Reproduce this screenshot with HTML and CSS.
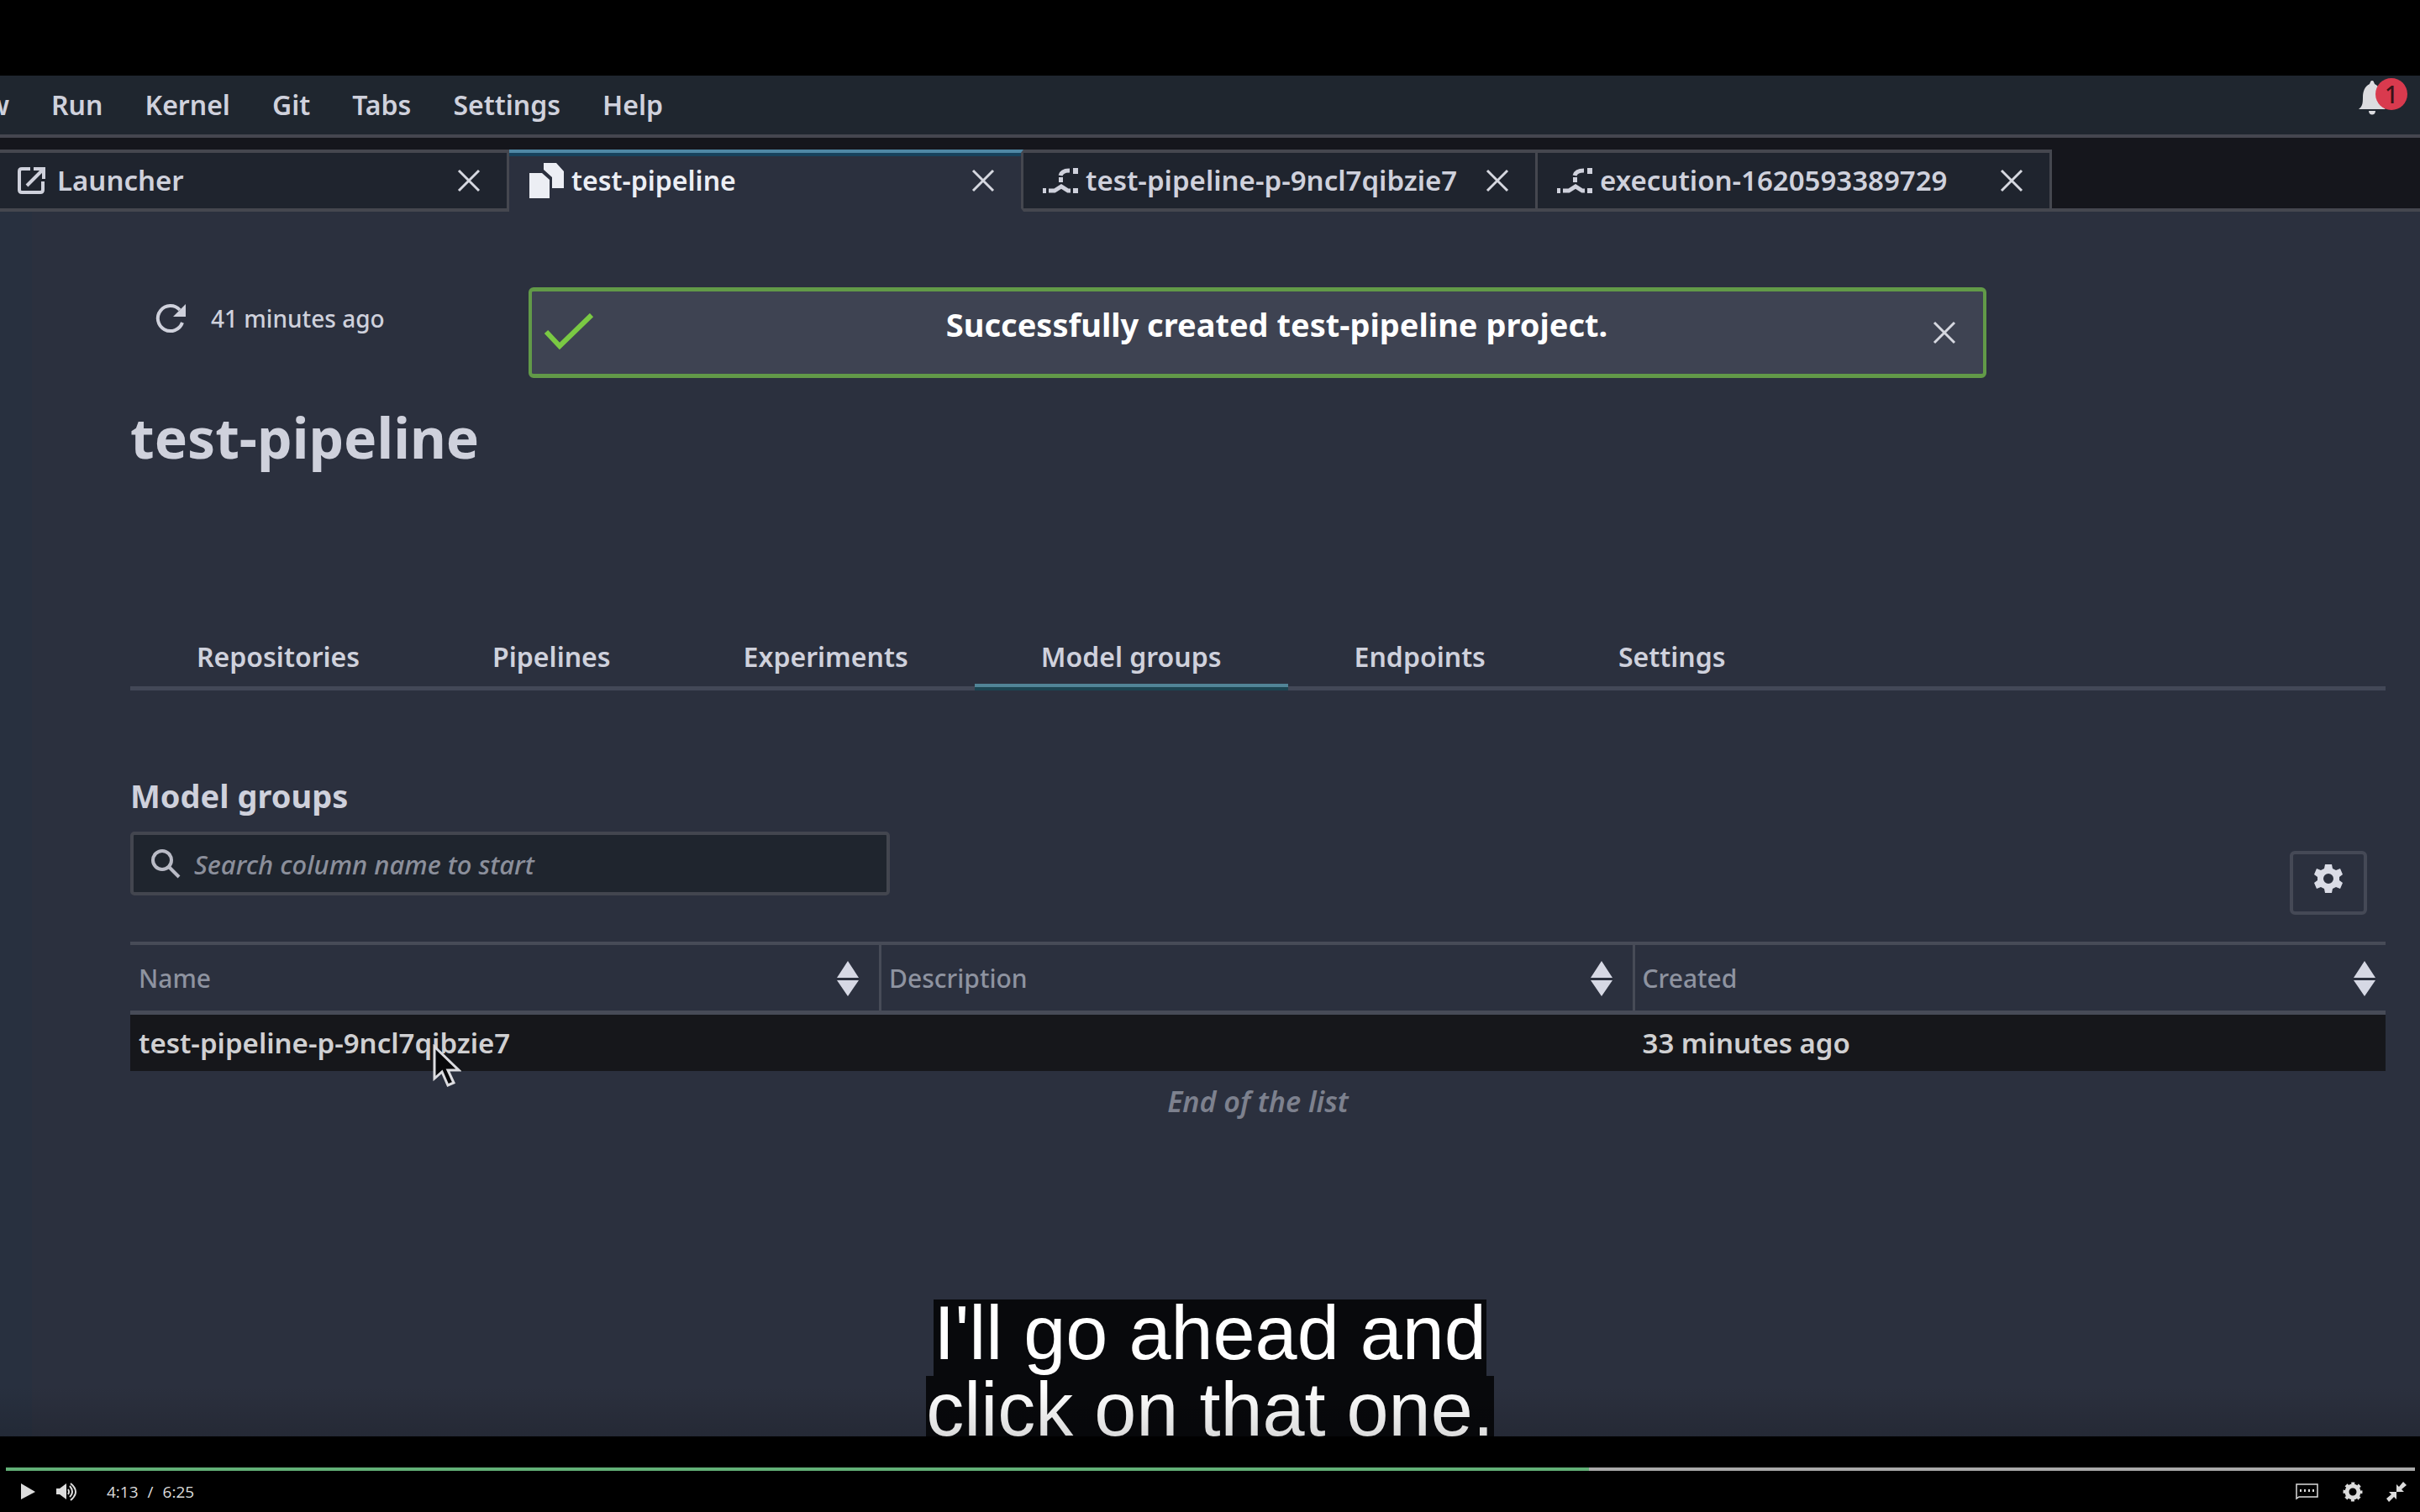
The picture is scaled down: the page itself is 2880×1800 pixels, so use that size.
FILE: index.html
```html
<!DOCTYPE html>
<html lang="en">
<head>
<meta charset="utf-8">
<title>test-pipeline</title>
<link rel="stylesheet" href="styles.css">
</head>
<body>
<svg class="sprite" aria-hidden="true">
  <symbol id="close" viewBox="0 0 28 28"><path d="M2 2 26 26M26 2 2 26" fill="none" stroke="currentColor" stroke-width="3"/></symbol>
  <symbol id="flow" viewBox="0 0 44 32"><g fill="currentColor"><path d="M0 25h4v6H0zM36 1h6v7h-6zM36 25h6v6h-6zM19 12h5v6h-5z"/></g><path d="M7 28h7l8-5 8 5h3" fill="none" stroke="currentColor" stroke-width="5"/><path d="M21 10c1-4 4-6 11-6" fill="none" stroke="currentColor" stroke-width="5"/></symbol>
  <symbol id="sort" viewBox="0 0 26 42"><path d="M13 0 26 20H0zM13 42 26 23H0z" fill="currentColor"/></symbol>
</svg>

<main class="video">
  <header class="menubar">
    <nav class="menus">
      <a class="menu menu-cut" href="#view">View</a>
      <a class="menu" href="#run">Run</a>
      <a class="menu" href="#kernel">Kernel</a>
      <a class="menu" href="#git">Git</a>
      <a class="menu" href="#tabs">Tabs</a>
      <a class="menu" href="#settings">Settings</a>
      <a class="menu" href="#help">Help</a>
    </nav>
    <button class="bell" type="button" aria-label="Notifications">
      <svg width="32" height="42" viewBox="0 0 32 42"><path d="M16 0c2 0 2 2 3 4 6 3 8 9 8 16 0 8 1 11 5 14H0c4-3 5-6 5-14C5 13 7 7 13 4c1-2 1-4 3-4zM12 36h8c0 6-8 6-8 0z" fill="#dcdce0"/></svg>
      <span class="badge">1</span>
    </button>
  </header>

  <div class="tabstrip">
    <div class="tab tab-first">
      <svg class="tab-icon" viewBox="0 0 36 36"><path d="M16 4H6q-3 0-3 3v22q0 3 3 3h22q3 0 3-3V19M20 4h12v12M31 5 12 24" fill="none" stroke="currentColor" stroke-width="4"/></svg>
      <span class="tab-name">Launcher</span>
      <button class="close" type="button" aria-label="Close Launcher"><svg width="28" height="28"><use href="#close"/></svg></button>
    </div>
    <div class="tab tab-active">
      <svg class="tab-icon wide" viewBox="0 0 44 44"><path d="M18 1h15l9 10v20H28V18L18 9zM1 13h15l9 8v22H1z" fill="currentColor"/></svg>
      <span class="tab-name">test-pipeline</span>
      <button class="close" type="button" aria-label="Close test-pipeline"><svg width="28" height="28"><use href="#close"/></svg></button>
    </div>
    <div class="tab">
      <svg class="tab-icon wide" viewBox="0 0 44 32"><use href="#flow"/></svg>
      <span class="tab-name">test-pipeline-p-9ncl7qibzie7</span>
      <button class="close" type="button" aria-label="Close test-pipeline-p-9ncl7qibzie7"><svg width="28" height="28"><use href="#close"/></svg></button>
    </div>
    <div class="tab">
      <svg class="tab-icon wide" viewBox="0 0 44 32"><use href="#flow"/></svg>
      <span class="tab-name">execution-1620593389729</span>
      <button class="close" type="button" aria-label="Close execution-1620593389729"><svg width="28" height="28"><use href="#close"/></svg></button>
    </div>
    <div class="tab-rest"></div>
  </div>

  <section class="page">
    <div class="top">
      <div class="refresh">
        <button class="plain" type="button" aria-label="Refresh"><svg width="40" height="40" viewBox="0 0 40 40"><path d="M34 25A15 15 0 1 1 31 10" fill="none" stroke="currentColor" stroke-width="4"/><path d="M38 3v15H23z" fill="currentColor"/></svg></button>
        <span>41 minutes ago</span>
      </div>
      <div class="banner" role="status">
        <svg width="60" height="46" viewBox="0 0 60 46"><path d="M3 22 19 39 57 2" fill="none" stroke="#7ac943" stroke-width="6"/></svg>
        <strong class="banner-text">Successfully created test-pipeline project.</strong>
        <button class="close" type="button" aria-label="Dismiss"><svg width="28" height="28"><use href="#close"/></svg></button>
      </div>
    </div>

    <h1>test-pipeline</h1>

    <nav class="sections">
      <a href="#repositories">Repositories</a>
      <a href="#pipelines">Pipelines</a>
      <a href="#experiments">Experiments</a>
      <a class="current" href="#model-groups">Model groups</a>
      <a href="#endpoints">Endpoints</a>
      <a href="#project-settings">Settings</a>
    </nav>

    <h2>Model groups</h2>
    <div class="tools">
      <label class="search">
        <svg width="36" height="36" viewBox="0 0 36 36"><circle cx="14" cy="14" r="11" fill="none" stroke="currentColor" stroke-width="4"/><path d="m22 22 12 12" stroke="currentColor" stroke-width="4"/></svg>
        <input type="text" placeholder="Search column name to start" aria-label="Search column name to start">
      </label>
      <button class="gear" type="button" aria-label="Table settings">
        <svg width="34" height="36" viewBox="0 0 34 36"><path fill-rule="evenodd" fill="currentColor" d="M13 1h8l1 5 4 2 5-2 3 7-4 3v4l4 3-3 7-5-2-4 2-1 5h-8l-1-5-4-2-5 2-3-7 4-3v-4l-4-3 3-7 5 2 4-2zM17 12a6 6 0 1 0 0 12 6 6 0 0 0 0-12z"/></svg>
      </button>
    </div>

    <table>
      <thead>
        <tr>
          <th><div class="head">Name<svg width="26" height="42"><use href="#sort"/></svg></div></th>
          <th><div class="head">Description<svg width="26" height="42"><use href="#sort"/></svg></div></th>
          <th><div class="head">Created<svg width="26" height="42"><use href="#sort"/></svg></div></th>
        </tr>
      </thead>
      <tbody>
        <tr>
          <td class="name">test-pipeline-p-9ncl7qibzie7
            <svg class="pointer" width="34" height="52" viewBox="0 0 34 52"><path d="M2 3v38l9-8 7 16 7-3-7-15h13z" fill="#08080a" stroke="#dcdce0" stroke-width="3"/></svg>
          </td>
          <td></td>
          <td>33 minutes ago</td>
        </tr>
      </tbody>
    </table>
    <p class="end">End of the list</p>
  </section>

  <div class="caption"><span>I'll go ahead and</span><span>click on that one.</span></div>
</main>

<footer class="player">
  <input class="seek" type="range" min="0" max="385" value="253" aria-label="Seek">
  <div class="controls">
    <button class="plain" type="button" aria-label="Play"><svg width="18" height="20" viewBox="0 0 18 20"><path d="M0 0v19l17-9z" fill="currentColor"/></svg></button>
    <button class="plain volume" type="button" aria-label="Mute"><svg width="26" height="22" viewBox="0 0 26 22"><path d="M0 7h4l8-6v19l-8-6H0z" fill="currentColor"/><path d="M14 8q2 3 0 6M16 4q6 7 0 13M17 1q12 10 0 20" fill="none" stroke="currentColor" stroke-width="2"/></svg></button>
    <div class="time"><span>4:13</span><span>/</span><span>6:25</span></div>
    <button class="plain cc" type="button" aria-label="Captions"><svg width="28" height="20" viewBox="0 0 28 20"><path d="M1 18V1h25v15H4z" fill="none" stroke="currentColor" stroke-width="1.5"/><path d="M5 7h2v3H5zM10 7h2v3h-2zM15 7h2v3h-2zM20 7h2v3h-2z" fill="currentColor"/></svg></button>
    <button class="plain" type="button" aria-label="Settings"><svg width="24" height="24" viewBox="0 0 24 24"><circle cx="12" cy="12" r="7" fill="none" stroke="currentColor" stroke-width="5"/><circle cx="12" cy="12" r="10" fill="none" stroke="currentColor" stroke-width="3" stroke-dasharray="4 3.85" stroke-dashoffset="2"/></svg></button>
    <button class="plain" type="button" aria-label="Exit full screen"><svg width="24" height="24" viewBox="0 0 24 24"><path d="M12 12V3l3 3 5-6 4 4-6 5 3 3zM12 12v9l-3-3-6 6-3-4 6-5-3-3z" fill="currentColor"/></svg></button>
  </div>
</footer>
</body>
</html>
```
FILE: styles.css
```css
* { box-sizing: border-box; }

body {
  margin: 0;
  min-height: 100vh;
  padding-top: 90px;
  display: flex;
  flex-direction: column;
  background: #000;
  color: #cfd1dc;
  font: 600 32px/44px "Noto Sans", "Open Sans", sans-serif;
}

a { color: inherit; text-decoration: none; }
button { padding: 0; border: 0; background: none; color: inherit; font: inherit; }
svg { display: block; flex: none; }
.sprite { position: absolute; width: 0; height: 0; }
.plain { display: flex; }

.video {
  position: relative;
  flex: 1;
  overflow: hidden;
  background: linear-gradient(90deg, #28303f 38px, #2b303e 38px);
}

/* Darkens the lower edge behind the player bar */
.video::after {
  content: "";
  position: absolute;
  inset: auto 0 0;
  height: 60px;
  background: linear-gradient(transparent, rgba(0, 0, 0, .14));
}

.menubar {
  display: flex;
  justify-content: space-between;
  height: 74px;
  padding-right: 15px;
  border-bottom: 4px solid #45464f;
  background: #1f262f;
}
.menus { display: flex; align-items: center; gap: 50px; }
.menu-cut { display: flex; justify-content: flex-end; width: 11px; }

.bell { position: relative; width: 58px; }
.bell svg { margin-top: -16px; }
.badge {
  position: absolute;
  top: 3px;
  right: 0;
  width: 38px;
  height: 38px;
  border-radius: 50%;
  background: #d93a4e;
  color: #3a1218;
  font-size: 28px;
  font-weight: 500;
  line-height: 38px;
}

.tabstrip { display: flex; padding-top: 14px; background: #15161c; }
.tab {
  display: flex;
  align-items: center;
  gap: 7px;
  width: 612px;
  height: 74px;
  padding: 0 31px 0 23px;
  border: solid #45474f;
  border-width: 4px 3px 4px 0;
  background: #1f242e;
  font-size: 33px;
}
.tab-first { width: 606px; gap: 12px; padding-left: 20px; }
.tab-active {
  border-color: #4f87a5 #45474f transparent;
  background: #2b303e;
  box-shadow: inset 0 4px #17425d;
  color: #eceef4;
  font-size: 32px;
}
.tab-icon { width: 36px; height: 36px; }
.tab-icon.wide { width: 44px; height: 44px; }
.tab-name { flex: 1; white-space: nowrap; }
.close { display: flex; color: #d6d8e0; }
.tab-rest { flex: 1; border-bottom: 4px solid #45474f; }

.page { padding: 90px 41px 60px 155px; }
.top { display: grid; grid-template-columns: 474fr 1735fr 475fr; }
.refresh {
  display: flex;
  align-items: center;
  gap: 28px;
  height: 74px;
  padding-left: 28px;
  font-size: 28px;
  font-weight: 500;
}
.banner {
  display: flex;
  align-items: center;
  height: 108px;
  padding: 0 32px 0 14px;
  border: solid #629a48;
  border-width: 5px 4px;
  border-radius: 6px;
  background: #3e4352;
}
.banner-text {
  flex: 1;
  padding: 0 0 20px 32px;
  color: #fff;
  font-size: 38px;
  font-weight: 700;
  text-align: center;
}

h1 { margin: 26px 0 0; font-size: 66px; line-height: 88px; }

.sections {
  display: flex;
  height: 74px;
  margin-top: 184px;
  border-bottom: 5px solid #434857;
}
.sections a { height: 74px; padding: 12px 79px 0; }
.sections .current { border-bottom: 4px solid #1d4552; box-shadow: inset 0 -4px #518497; }

h2 { margin: 99px 0 0; font-size: 38px; line-height: 52px; }
.tools { display: flex; justify-content: space-between; margin-top: 17px; }
.search {
  display: flex;
  align-items: center;
  gap: 16px;
  width: 904px;
  height: 76px;
  padding-left: 20px;
  border: 4px solid #43464f;
  border-radius: 5px;
  background: #1f252e;
  color: #b9bbc6;
}
.search input {
  flex: 1;
  height: 60px;
  padding: 2px 0 0;
  border: 0;
  outline: 0;
  background: none;
  color: inherit;
  font: italic 500 31px "Noto Sans", sans-serif;
}
.search input::placeholder { color: #8b8f9b; opacity: 1; }
.gear {
  display: flex;
  justify-content: center;
  width: 92px;
  height: 76px;
  margin: 23px 22px 0 0;
  padding-top: 11px;
  border: 4px solid #454956;
  border-radius: 6px;
  color: #dadce6;
}

table {
  width: 100%;
  margin-top: 32px;
  border-collapse: separate;
  border-spacing: 0;
  table-layout: fixed;
}
th {
  height: 87px;
  padding: 2px 12px 0;
  border: solid #474b57;
  border-width: 4px 0 5px;
  color: #8e93a0;
  font-size: 30px;
  font-weight: 500;
}
th:first-child { width: 33.2%; }
th + th { border-left-width: 3px; padding-left: 9px; }
.head { display: flex; align-items: center; justify-content: space-between; }
th:not(:last-child) .head { padding-right: 12px; }
.head svg { color: #d6d8e4; }
td { height: 67px; padding: 0 12px; background: #16171b; color: #d0d0d2; font-size: 33px; }
td:first-child, th:first-child { padding-left: 10px; }
.name { position: relative; white-space: nowrap; }
.pointer { position: absolute; left: 360px; top: 35px; }
.end { margin: 12px 0 0; color: #7d818e; font-size: 34px; font-style: italic; line-height: 48px; text-align: center; }

.caption {
  position: absolute;
  inset: auto 0 -19px;
  color: #fff;
  font: 90px/80px "Liberation Sans", Arial, sans-serif;
}
.caption span {
  display: block;
  width: fit-content;
  height: 91px;
  margin: 0 auto;
  background: #08090c;
}

.player { display: flex; flex-direction: column; height: 90px; padding: 37px 6px 0 7px; color: #dcdcdc; }
.seek {
  appearance: none;
  width: 100%;
  height: 4px;
  margin: 0;
  background: linear-gradient(90deg, #62b077 65.7%, #a9a9a9 65.7%);
}
.seek::-webkit-slider-thumb { appearance: none; width: 1px; height: 4px; }
.controls { display: flex; align-items: center; gap: 28px; height: 54px; padding: 0 10px 0 18px; }
.volume { margin-left: -4px; }
.time { display: flex; gap: 11px; margin-left: 6px; font: 19px "Open Sans", sans-serif; }
.cc { margin-left: auto; }
```
